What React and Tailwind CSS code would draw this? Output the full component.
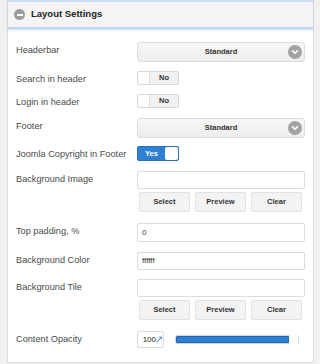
import React from 'react';

const font = { fontFamily: '"Liberation Sans", Arial, sans-serif' };

const Select = () => (
  <div className="relative flex h-[20px] w-[168px] items-center justify-center rounded-[3px] border border-[#dcdcdc] bg-gradient-to-b from-[#f7f7f7] to-[#ededed] text-[7.5px] font-bold text-[#333]">
    Standard
    <span className="absolute right-[2px] top-[2px] flex h-[14px] w-[14px] items-center justify-center rounded-full bg-[#a3a3a3]">
      <svg width="8" height="8" viewBox="0 0 8 8">
        <path d="M1.5 2.8 L4 5.3 L6.5 2.8" fill="none" stroke="#fff" strokeWidth="1.6" strokeLinecap="round" strokeLinejoin="round" />
      </svg>
    </span>
  </div>
);

const Toggle = ({ on }) =>
  on ? (
    <div className="flex h-[15px] w-[42px] items-center rounded-[2px] border border-[#2a6fb8] bg-[#2f7fd3]">
      <span className="flex-1 text-center text-[7.5px] font-bold text-white">Yes</span>
      <span className="h-[13px] w-[13px] rounded-[2px] bg-white" />
    </div>
  ) : (
    <div className="flex h-[14px] w-[42px] items-center rounded-[2px] border border-[#d8d8d8] bg-[#f1f1f1]">
      <span className="h-[12px] w-[12px] rounded-[1px] border-r border-[#dedede] bg-white" />
      <span className="flex-1 text-center text-[7.5px] font-bold text-[#333]">No</span>
    </div>
  );

const Input = ({ value, h = 'h-[18px]' }) => (
  <div className={`flex ${h} w-[168px] items-center rounded-[2px] border border-[#dcdcdc] bg-white px-[4px] text-[8px] text-[#333]`}>
    {value}
  </div>
);

const Buttons = () => (
  <div className="mt-[3px] flex gap-[5px] pl-[2px]">
    {['Select', 'Preview', 'Clear'].map((b) => (
      <div
        key={b}
        className="flex h-[20px] w-[51px] items-center justify-center rounded-[2px] border border-[#e2e2e2] bg-[#f3f3f3] text-[7.5px] font-bold text-[#333]"
      >
        {b}
      </div>
    ))}
  </div>
);

const Row = ({ label, children, className = '' }) => (
  <div className={`flex ${className}`}>
    <div className="w-[121px] whitespace-nowrap pt-[2px] text-[9.2px] leading-[12px] text-[#4a4a4a]">{label}</div>
    <div>{children}</div>
  </div>
);

const App = () => {
  return (
    <div className="h-[364px] w-[320px] overflow-hidden bg-[#f1f1f1] pl-[7px] pr-[6px]" style={font}>
      <div className="h-[363px] border-x border-b border-[#dcdcdc] bg-white">
        <div className="flex h-[29px] items-center gap-[6px] border-y-2 border-t-[#c9def2] border-b-[#bcd6ef] bg-[#f4f4f4] pl-[6px] shadow-[0_1px_2px_rgba(150,190,230,0.5)]">
          <span className="flex h-[11px] w-[11px] items-center justify-center rounded-full bg-[#9c9c9c]">
            <span className="h-[2px] w-[6px] bg-white" />
          </span>
          <span className="text-[9.5px] font-bold text-[#222]">Layout Settings</span>
        </div>

        <div className="pl-[8px] pt-[13px]">
          <Row label="Headerbar">
            <Select />
          </Row>
          <Row label="Search in header" className="mt-[9px]">
            <Toggle />
          </Row>
          <Row label="Login in header" className="mt-[9px]">
            <Toggle />
          </Row>
          <Row label="Footer" className="mt-[10px]">
            <Select />
          </Row>
          <Row label="Joomla Copyright in Footer" className="mt-[8px]">
            <Toggle on />
          </Row>
          <Row label="Background Image" className="mt-[10px]">
            <Input />
            <Buttons />
          </Row>
          <Row label="Top padding, %" className="mt-[11px]">
            <Input value="0" h="h-[19px]" />
          </Row>
          <Row label="Background Color" className="mt-[10px]">
            <Input value="ffffff" />
          </Row>
          <Row label="Background Tile" className="mt-[9px]">
            <Input />
            <Buttons />
          </Row>
          <Row label="Content Opacity" className="mt-[11px]">
            <div className="flex items-center">
              <div className="flex h-[17px] w-[27px] items-center justify-end rounded-[2px] border border-[#dcdcdc] bg-white pr-[1px] text-[8px] text-[#222]">
                100
                <svg width="6" height="7" viewBox="0 0 6 7">
                  <path d="M0.5 6.5 L5.5 1" stroke="#2f7fd3" strokeWidth="1" fill="none" />
                  <path d="M3 1 L5.5 1 L5.5 3.5" stroke="#2f7fd3" strokeWidth="0.8" fill="none" />
                </svg>
              </div>
              <div className="ml-[11px] flex h-[9px] w-[124px] items-center rounded-[2px] border border-[#d6d6d6] bg-white">
                <div className="h-[7px] flex-1 rounded-l-[1px] border border-[#1f66b0] bg-[#2f80d4]" />
                <div className="h-[9px] w-[9px] rounded-[2px] bg-white" />
              </div>
            </div>
          </Row>
        </div>
      </div>
    </div>
  );
};

export default App;
